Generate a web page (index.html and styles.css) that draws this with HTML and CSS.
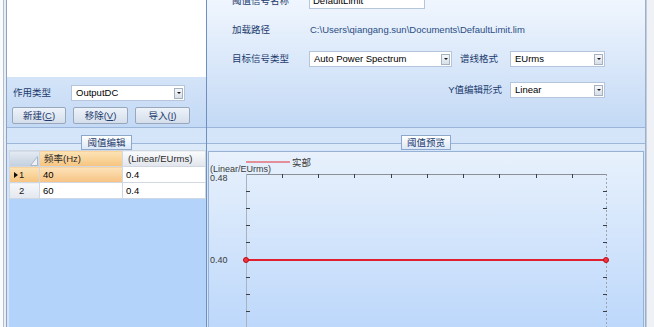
FILE: index.html
```html
<!DOCTYPE html>
<html>
<head>
<meta charset="utf-8">
<link rel="stylesheet" href="styles.css">
</head>
<body>
<div class="app">
  <div class="left">
    <div class="left-top">
      <div class="list"></div>
      <div class="type-row">
        <span class="lbl type-lbl">作用类型</span>
        <div class="combo combo-type"><span class="combo-text">OutputDC</span><span class="drop"><i></i></span></div>
      </div>
      <div class="btn-row">
        <div class="btn btn-new">新建(<u>C</u>)</div>
        <div class="btn btn-wide">移除(<u>V</u>)</div>
        <div class="btn btn-wide">导入(<u>I</u>)</div>
      </div>
    </div>
    <div class="group">
      <div class="group-head"><span class="group-tab">阈值编辑</span></div>
      <div class="grid-area">
        <table class="grid">
          <colgroup><col class="c0"><col class="c1"><col class="c2"></colgroup>
          <tr class="hdr">
            <td class="corner"><svg class="tri" width="8" height="10" viewBox="0 0 8 10"><polygon points="0.5,9.5 7.5,0.5 7.5,9.5" fill="#eef2f7" stroke="#aab7c7" stroke-width="1"/></svg></td>
            <td class="hsel">频率(Hz)</td>
            <td class="hnorm">(Linear/EUrms)</td>
          </tr>
          <tr>
            <td class="rh rh-sel"><svg class="arrow" width="4" height="6" viewBox="0 0 4 6"><polygon points="0,0 4,3 0,6" fill="#111"/></svg>1</td>
            <td class="cell cell-sel">40</td>
            <td class="cell">0.4</td>
          </tr>
          <tr>
            <td class="rh rh-norm">2</td>
            <td class="cell">60</td>
            <td class="cell">0.4</td>
          </tr>
        </table>
      </div>
    </div>
  </div>
  <div class="right">
    <div class="right-top">
      <div class="form">
        <span class="lbl col1">阈值信号名称</span>
        <div class="tb">DefaultLimit</div>
        <span class="lbl col1">加载路径</span>
        <span class="path">C:\Users\qiangang.sun\Documents\DefaultLimit.lim</span>
        <span class="lbl col1">目标信号类型</span>
        <div class="combo col2"><span class="combo-text">Auto Power Spectrum</span><span class="drop"><i></i></span></div>
        <span class="lbl lbl-mid">谱线格式</span>
        <div class="combo col4"><span class="combo-text">EUrms</span><span class="drop"><i></i></span></div>
        <span class="lbl lbl-y">Y值编辑形式</span>
        <div class="combo col4"><span class="combo-text">Linear</span><span class="drop"><i></i></span></div>
      </div>
    </div>
    <div class="group">
      <div class="group-head"><span class="group-tab">阈值预览</span></div>
      <div class="chart">
        <svg width="434" height="180" viewBox="0 0 434 180">
          <line x1="37" y1="10" x2="81" y2="10" stroke="#e0303a" stroke-width="1.2"/>
          <text x="83" y="13.5" class="cjk">实部</text>
          <text x="1" y="20.3" class="axis-txt">(Linear/EUrms)</text>
          <text x="1" y="29.3" class="axis-txt">0.48</text>
          <text x="1" y="111.3" class="axis-txt">0.40</text>
          <line x1="37" y1="22.5" x2="398" y2="22.5" stroke="#8a9098" stroke-width="1"/>
          <g stroke="#3a3f46" stroke-width="1">
            <line x1="73.5" y1="22" x2="73.5" y2="26"/>
            <line x1="109.5" y1="22" x2="109.5" y2="26"/>
            <line x1="145.5" y1="22" x2="145.5" y2="26"/>
            <line x1="182.5" y1="22" x2="182.5" y2="26"/>
            <line x1="218.5" y1="22" x2="218.5" y2="26"/>
            <line x1="254.5" y1="22" x2="254.5" y2="26"/>
            <line x1="290.5" y1="22" x2="290.5" y2="26"/>
            <line x1="327.5" y1="22" x2="327.5" y2="26"/>
            <line x1="363.5" y1="22" x2="363.5" y2="26"/>
          </g>
          <line x1="37.5" y1="22" x2="37.5" y2="180" stroke="#a9b2bd" stroke-width="1"/>
          <line x1="397.5" y1="22" x2="397.5" y2="180" stroke="#9aa3ae" stroke-width="1" stroke-dasharray="2 2"/>
          <g stroke="#3a3f46" stroke-width="1">
            <line x1="37" y1="39.5" x2="41" y2="39.5"/>
            <line x1="37" y1="56.5" x2="41" y2="56.5"/>
            <line x1="37" y1="73.5" x2="41" y2="73.5"/>
            <line x1="37" y1="90.5" x2="41" y2="90.5"/>
            <line x1="37" y1="125.5" x2="41" y2="125.5"/>
            <line x1="37" y1="142.5" x2="41" y2="142.5"/>
            <line x1="37" y1="159.5" x2="41" y2="159.5"/>
            <line x1="394" y1="39.5" x2="398" y2="39.5"/>
            <line x1="394" y1="56.5" x2="398" y2="56.5"/>
            <line x1="394" y1="73.5" x2="398" y2="73.5"/>
            <line x1="394" y1="90.5" x2="398" y2="90.5"/>
            <line x1="394" y1="125.5" x2="398" y2="125.5"/>
            <line x1="394" y1="142.5" x2="398" y2="142.5"/>
            <line x1="394" y1="159.5" x2="398" y2="159.5"/>
          </g>
          <line x1="37" y1="108" x2="397" y2="108" stroke="#e0202c" stroke-width="2"/>
          <circle cx="37" cy="108" r="2.5" fill="#f3343e" stroke="#b50d18" stroke-width="1"/>
          <circle cx="397" cy="108" r="2.5" fill="#f3343e" stroke="#b50d18" stroke-width="1"/>
        </svg>
      </div>
    </div>
  </div>
  <div class="edge"></div>
</div>
</body>
</html>
```

FILE: styles.css
```css
* { box-sizing: border-box; }
html, body { margin: 0; padding: 0; }
body {
  width: 654px;
  height: 327px;
  overflow: hidden;
  background: #e3e8ee;
  font-family: "Liberation Sans", "Noto Sans CJK SC", sans-serif;
  font-size: 9.5px;
  color: #000;
}
.app {
  display: flex;
  height: 327px;
  padding-left: 6px;
  background: linear-gradient(to right, #fafbfc 0, #fafbfc 3px, #b4bfcc 3px, #b4bfcc 4px, #e8edf3 4px, #e8edf3 6px);
}
.left {
  width: 201px;
  flex: none;
  display: flex;
  flex-direction: column;
  border-left: 1px solid #8da3bf;
  border-right: 1px solid #6e8fbf;
}
.left-top {
  height: 128px;
  flex: none;
  display: flex;
  flex-direction: column;
  background: linear-gradient(#eef5fd, #c3d9f5);
  border-bottom: 1px solid #9cb6da;
}
.list { height: 77px; flex: none; background: #fff; }
.type-row {
  display: flex;
  align-items: center;
  height: 16px;
  margin-top: 8px;
  padding-left: 6px;
}
.type-lbl { width: 58px; flex: none; }
.lbl {
  color: #1d3b6d;
  line-height: 16px;
  white-space: nowrap;
}
.combo {
  display: flex;
  align-items: center;
  height: 16px;
  background: #fff;
  border: 1px solid #b5c5db;
}
.combo-type { width: 114px; }
.combo-text {
  flex: 1;
  padding-left: 4px;
  line-height: 14px;
  white-space: nowrap;
  overflow: hidden;
}
.drop {
  width: 9px;
  height: 11px;
  margin-right: 1px;
  flex: none;
  border: 1px solid #a7b2c1;
  background: linear-gradient(#f6f8fb, #d8dfe8);
  display: flex;
  align-items: center;
  justify-content: center;
}
.drop i {
  width: 0;
  height: 0;
  border-left: 2px solid transparent;
  border-right: 2px solid transparent;
  border-top: 2px solid #1a1a1a;
}
.btn-row {
  display: flex;
  gap: 7px;
  margin-top: 6px;
  padding-left: 5px;
}
.btn {
  height: 17px;
  border: 1px solid #98a7bb;
  border-radius: 2px;
  background: linear-gradient(#eef3fa, #d4deeb);
  color: #1d3b6d;
  display: flex;
  align-items: center;
  justify-content: center;
  line-height: 15px;
  white-space: nowrap;
}
.btn-new { width: 54px; }
.btn-wide { width: 55px; }
.group {
  flex: 1;
  display: flex;
  flex-direction: column;
  min-height: 0;
  padding-top: 7px;
  background: #d5e5f9;
}
.group-head {
  height: 15px;
  flex: none;
  display: flex;
  justify-content: center;
  background: linear-gradient(to bottom, transparent 0, transparent 8px, #9db6da 8px, #9db6da 9px, #dce9f9 9px);
}
.group-tab {
  height: 15px;
  padding: 0 5px;
  border: 1px solid #8ea8cc;
  background: linear-gradient(#ffffff, #dbe7f7);
  color: #1d3b6d;
  line-height: 13px;
  white-space: nowrap;
}
.grid-area {
  flex: 1;
  margin-left: 2px;
  background: #b3d3fb;
}
.grid {
  border-collapse: collapse;
  table-layout: fixed;
  width: 196px;
}
.c0 { width: 30px; }
.c1 { width: 83px; }
.c2 { width: 83px; }
.grid td {
  height: 16px;
  padding: 0;
  border: 1px solid #cfd7e2;
  line-height: 14px;
  white-space: nowrap;
  overflow: hidden;
  vertical-align: middle;
}
.corner {
  background: linear-gradient(#e4ebf3, #c2cfdf);
  text-align: right;
}
.tri { display: block; margin: 4px 1px 0 auto; }
.hsel {
  background: linear-gradient(#fde3b6, #f6c47e);
  color: #2a2a2a;
  padding-left: 4px !important;
}
.hnorm {
  background: linear-gradient(#fafbfc, #e1e6ec);
  color: #2a2a2a;
  padding-left: 5px !important;
}
.rh { color: #1a1a1a; }
.rh-sel {
  background: linear-gradient(#fde3b6, #f6c47e);
  padding-left: 4px !important;
}
.rh-sel .arrow { margin-right: 1px; vertical-align: 0; }
.rh-norm {
  background: linear-gradient(#f5f7fa, #e3e8ef);
  padding-left: 9px !important;
}
.cell { background: #fff; padding-left: 3px !important; }
.cell-sel { background: linear-gradient(#fde2ba, #f7c382); }
.right {
  width: 439px;
  flex: none;
  display: flex;
  flex-direction: column;
  border-right: 1px solid #9db0c9;
}
.right-top {
  height: 128px;
  flex: none;
  overflow: hidden;
  background: linear-gradient(#f0f6fe, #c3d9f5);
  border-bottom: 1px solid #9cb6da;
}
.form {
  display: grid;
  grid-template-columns: 77px 143px 58px 95px;
  grid-template-rows: 29px 29px 31px 16px;
  align-items: start;
  margin-top: -7px;
  padding-left: 25px;
}
.col1 { grid-column: 1; }
.col2 { grid-column: 2; }
.col4 { grid-column: 4; }
.tb {
  grid-column: 2;
  width: 116px;
  height: 16px;
  background: #fff;
  border: 1px solid #b5c5db;
  padding-left: 3px;
  line-height: 14px;
}
.path {
  grid-column: 2 / 5;
  color: #2b4d83;
  padding-left: 1px;
  line-height: 16px;
  white-space: nowrap;
}
.lbl-mid { grid-column: 3; padding-left: 8px; }
.lbl-y {
  grid-column: 2 / 4;
  justify-self: end;
  padding-right: 8px;
}
.chart {
  flex: 1;
  margin: 1px 1px 0 1px;
  border: 1px solid #98b2d6;
  border-bottom: none;
  background: linear-gradient(#e8f1fc, #bdd8fb 175px);
  overflow: hidden;
}
.chart svg { display: block; }
.axis-txt {
  font-family: "Liberation Sans", sans-serif;
  font-size: 9px;
  fill: #3a3a3a;
}
.cjk {
  font-family: "Noto Sans CJK SC", sans-serif;
  font-size: 9.5px;
  fill: #3a3a3a;
}
.edge {
  flex: 1;
  background: linear-gradient(to right, #c3ccd8 0, #c3ccd8 1px, #eef1f5 1px);
}
```
